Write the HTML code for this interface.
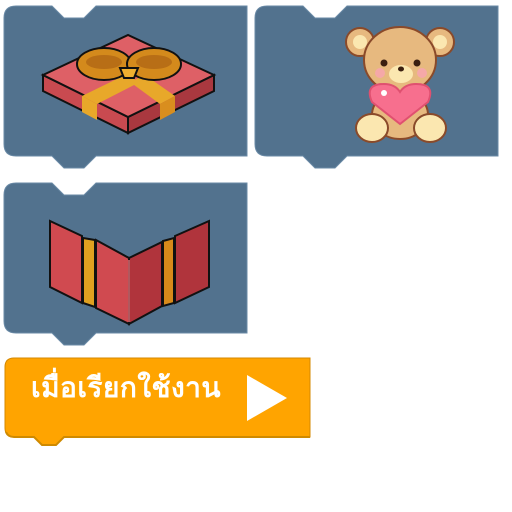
<!DOCTYPE html>
<html><head><meta charset="utf-8"><style>
html,body{margin:0;padding:0;background:#fff;width:512px;height:512px;overflow:hidden}
svg{position:absolute;left:0;top:0}
.t{position:absolute;left:31px;top:366px;font:bold 28px "Liberation Sans","Noto Sans CJK SC",sans-serif;color:#fff;white-space:nowrap;letter-spacing:0.5px}
</style></head><body>
<svg width="512" height="512" viewBox="0 0 512 512">
<defs>
<path id="blk" d="M12 0 H48 L60 12 H80 L92 0 H243 V150 H92 L80 162 H60 L48 150 H12 Q0 150 0 138 V12 Q0 0 12 0 Z"/>
</defs>
<g fill="#52728e" stroke="#6a8aa6" stroke-width="1">
<use href="#blk" transform="translate(4,6)"/>
<use href="#blk" transform="translate(255,6)"/>
<use href="#blk" transform="translate(4,183)"/>
</g>
<!-- gift -->
<g stroke="#111" stroke-width="2" stroke-linejoin="miter">
<polygon points="43,75 128,117 128,133 43,91" fill="#c94a50"/>
<polygon points="214,75 128,117 128,133 214,91" fill="#a9383f"/>
<polygon points="43,75 128,35 214,75 128,117" fill="#de6066"/>
</g>
<polygon points="82,96 97,104 97,120 82,112" fill="#e8a82a"/>
<polygon points="160,104 175,96 175,112 160,120" fill="#d98e1e"/>
<polygon points="82,96 125,75 140,82 97,104" fill="#e8a82a"/>
<polygon points="130,82 145,75 175,96 160,104" fill="#e8a82a"/>
<g stroke="#111" stroke-width="2">
<ellipse cx="104" cy="64" rx="27" ry="16" fill="#d48a1c"/>
<ellipse cx="154" cy="64" rx="27" ry="16" fill="#d48a1c"/>
</g>
<ellipse cx="104" cy="62" rx="18" ry="7" fill="#b86e16"/>
<ellipse cx="154" cy="62" rx="18" ry="7" fill="#b86e16"/>
<polygon points="120,68 138,68 134,78 124,78" fill="#f0b030" stroke="#111" stroke-width="2"/>
<!-- bear -->
<g stroke="#8a4a2a" stroke-width="2">
<circle cx="360" cy="42" r="14" fill="#e7b97f"/>
<circle cx="440" cy="42" r="14" fill="#e7b97f"/>
<ellipse cx="400" cy="115" rx="28" ry="24" fill="#e7b97f"/>
<ellipse cx="400" cy="60" rx="36" ry="33" fill="#e7b97f"/>
<ellipse cx="372" cy="128" rx="16" ry="14" fill="#fbe7b0"/>
<ellipse cx="430" cy="128" rx="16" ry="14" fill="#fbe7b0"/>
</g>
<circle cx="360" cy="42" r="7" fill="#fbe7b0"/>
<circle cx="440" cy="42" r="7" fill="#fbe7b0"/>
<ellipse cx="401" cy="74" rx="12" ry="9" fill="#fbe7b0"/>
<circle cx="384" cy="63" r="3.5" fill="#3a1e10"/>
<circle cx="417" cy="63" r="3.5" fill="#3a1e10"/>
<ellipse cx="401" cy="69" rx="3" ry="2.5" fill="#3a1e10"/>
<circle cx="380" cy="73" r="5" fill="#f5a8a8"/>
<circle cx="422" cy="73" r="5" fill="#f5a8a8"/>
<path d="M400 124 L372 102 Q364 84 384 84 Q395 84 400 92 Q405 84 416 84 Q436 84 428 102 Z" fill="#f76f8e" stroke="#e05070" stroke-width="2"/>
<circle cx="384" cy="93" r="3" fill="#fff"/>
<!-- open box -->
<g stroke="#111" stroke-width="2">
<polygon points="50,221 82,236 82,303 50,287" fill="#d04a50"/>
<polygon points="83,238 95,240 95,307 83,303" fill="#e0a020"/>
<polygon points="96,240 129,258 129,324 96,308" fill="#d04a50"/>
<polygon points="129,258 162,242 162,306 129,324" fill="#b0343c"/>
<polygon points="163,241 174,238 174,303 163,306" fill="#d88a1a"/>
<polygon points="175,236 209,221 209,287 175,303" fill="#b0343c"/>
</g>
<line x1="129" y1="260" x2="129" y2="322" stroke="#e77078" stroke-width="1.5"/>
<!-- orange hat block -->
<path d="M14 358 H310 V437 H64 L56 445 H42 L34 437 H14 Q5 437 5 428 V367 Q5 358 14 358 Z" fill="#ffa400" stroke="#d48800" stroke-width="1"/>
<path d="M6 432 Q8 437 14 437 H34 L42 445 H56 L64 437 H310" fill="none" stroke="#cf8a00" stroke-width="2"/>
<polygon points="247,375 247,421 287,398" fill="#fff"/>
</svg>
<div class="t">เมื่อเรียกใช้งาน</div>
</body></html>
